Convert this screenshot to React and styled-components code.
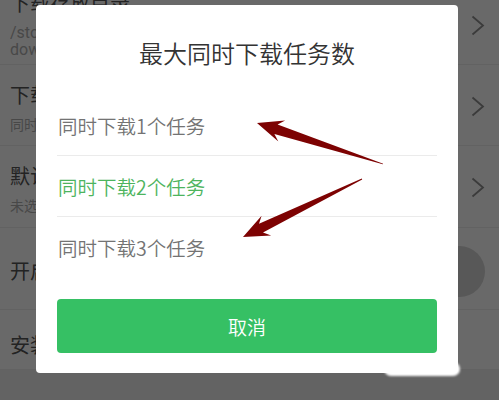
import React from "react";
import styled, { createGlobalStyle } from "styled-components";

const GlobalStyle = createGlobalStyle`
  html, body { margin: 0; padding: 0; background: #fff; }
  * { box-sizing: border-box; }
`;

const Page = styled.div`
  position: relative;
  width: 499px;
  height: 400px;
  overflow: hidden;
  background: #f0f0f0;
  font-family: "Noto Sans CJK SC", "Noto Sans", sans-serif;
`;

const SettingsList = styled.div`
  margin-top: -27px;
  background: #fff;
`;

const SettingRow = styled.div`
  display: flex;
  align-items: center;
  height: ${(p) => p.$h}px;
  padding: 0 14px 0 10px;
  border-bottom: 1px solid #eee;
`;

const RowText = styled.div`
  flex: 1;
  align-self: flex-start;
  padding-top: ${(p) => p.$pt}px;
  min-width: 0;
  white-space: nowrap;
  overflow: hidden;
`;

const RowTitle = styled.div`
  font-size: 20px;
  line-height: 26px;
  color: #555;
`;

const RowSub = styled.div`
  margin-top: ${(p) => (p.$tight ? 0 : 8)}px;
  font-size: ${(p) => (p.$path ? 16 : 14)}px;
  line-height: 17px;
  color: #b0b0b0;
  font-family: ${(p) =>
    p.$path ? '"Roboto", "Noto Sans CJK SC", sans-serif' : "inherit"};
`;

const ChevronBox = styled.div`
  display: flex;
  margin-top: ${(p) => p.$dy || 0}px;
`;

const Knob = styled.div`
  width: 51px;
  height: 51px;
  border-radius: 50%;
  background: #d6d6d6;
  margin-top: ${(p) => p.$dy || 0}px;
`;

const Overlay = styled.div`
  position: absolute;
  inset: 0;
  background: rgba(0, 0, 0, 0.59);
  display: flex;
  align-items: flex-start;
  padding: 5px 0 0 36px;
`;

const Dialog = styled.div`
  width: 422px;
  background: #fff;
  border-radius: 4px;
  padding: 0 21px 20px;
  display: flex;
  flex-direction: column;
`;

const DialogTitle = styled.div`
  height: 89px;
  padding-top: 5px;
  display: flex;
  align-items: center;
  justify-content: center;
  font-size: 24px;
  font-weight: 350;
  color: #333;
`;

const Options = styled.div`
  display: flex;
  flex-direction: column;
`;

const Option = styled.div`
  height: 61px;
  display: flex;
  align-items: center;
  padding: 1px 0 0 1px;
  font-size: 19.5px;
  font-weight: 350;
  color: ${(p) => (p.$active ? "#4db45d" : "#737373")};
  & + & {
    border-top: 1px solid #ebebeb;
  }
`;

const CancelButton = styled.button`
  margin-top: 22px;
  height: 54px;
  width: 100%;
  border: none;
  border-radius: 4px;
  background: #36c064;
  color: #fff;
  font-family: inherit;
  font-size: 19px;
  font-weight: 350;
  padding: 0;
`;

const Annotations = styled.svg`
  position: absolute;
  left: 0;
  top: 0;
  pointer-events: none;
`;

const Smudge = styled.div`
  position: absolute;
  left: 384px;
  top: 362px;
  width: 76px;
  height: 14px;
  border-radius: 7px;
  background: #fff;
  filter: blur(1.2px);
`;

const Chevron = ({ dy }) => (
  <ChevronBox $dy={dy}>
    <svg width="14" height="21" viewBox="0 0 14 21">
      <polyline
        points="1.5,1.5 12,10.5 1.5,19.5"
        fill="none"
        stroke="#8f8f8f"
        strokeWidth="1.8"
      />
    </svg>
  </ChevronBox>
);

const options = [
  { label: "同时下载1个任务", active: false },
  { label: "同时下载2个任务", active: true },
  { label: "同时下载3个任务", active: false },
];

export default function App() {
  return (
    <>
      <GlobalStyle />
      <Page>
        <SettingsList>
          <SettingRow $h={92}>
            <RowText $pt={17}>
              <RowTitle>下载存放目录</RowTitle>
              <RowSub $path>/storage/emulated/0/</RowSub>
              <RowSub $path $tight>download/</RowSub>
            </RowText>
            <Chevron dy={14} />
          </SettingRow>
          <SettingRow $h={81}>
            <RowText $pt={17}>
              <RowTitle>下载任务数</RowTitle>
              <RowSub>同时下载2个任务</RowSub>
            </RowText>
            <Chevron dy={3} />
          </SettingRow>
          <SettingRow $h={82}>
            <RowText $pt={17}>
              <RowTitle>默认下载位置</RowTitle>
              <RowSub>未选择</RowSub>
            </RowText>
            <Chevron dy={2} />
          </SettingRow>
          <SettingRow $h={82}>
            <RowText $pt={30}>
              <RowTitle>开启下载提醒</RowTitle>
            </RowText>
            <Knob $dy={6} />
          </SettingRow>
          <SettingRow $h={60}>
            <RowText $pt={22}>
              <RowTitle>安装包管理</RowTitle>
            </RowText>
          </SettingRow>
        </SettingsList>

        <Overlay>
          <Dialog>
            <DialogTitle>最大同时下载任务数</DialogTitle>
            <Options>
              {options.map((o) => (
                <Option key={o.label} $active={o.active}>
                  {o.label}
                </Option>
              ))}
            </Options>
            <CancelButton>取消</CancelButton>
          </Dialog>
        </Overlay>

        <Smudge />

        <Annotations width="499" height="400" viewBox="0 0 499 400">
          <polygon
            fill="#7d0202"
            points="257,123 285.1,120.5 277.6,124.6 383.2,163.8 382.8,164.2 274.4,133.9 278.3,141.5"
          />
          <polygon
            fill="#7d0202"
            points="243,237 271.2,235.5 263,232.5 362.2,179.4 361.8,178.6 259,223.8 261.6,215.7"
          />
        </Annotations>
      </Page>
    </>
  );
}
